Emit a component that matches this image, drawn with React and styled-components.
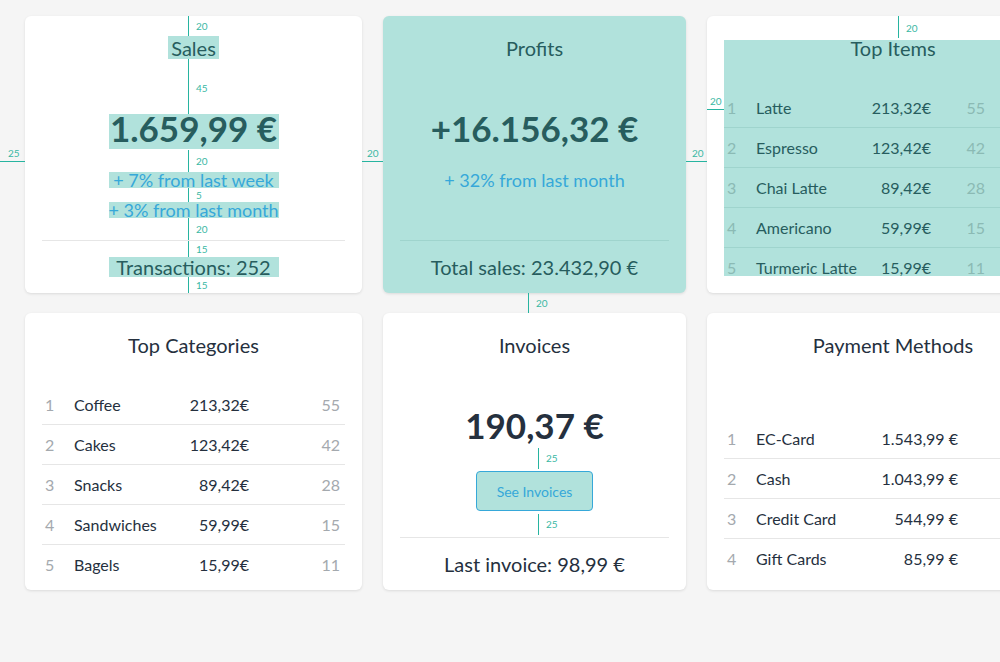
import React from "react";
import styled, { createGlobalStyle } from "styled-components";

const HL = "#b1e2dc";
const HL_TEXT = "#275d5e";
const HL_GRAY = "#8bbab4";
const HL_LINE = "#9fd4cd";
const TEXT = "#25303e";
const GRAY = "#a4a9ae";
const LINE = "#e6e6e6";
const BLUE = "#36a8d9";
const GUIDE = "#27b4a0";

const GlobalStyle = createGlobalStyle`
  html, body {
    margin: 0;
    background: #f5f5f5;
    overflow: hidden;
  }
  body {
    font-family: Lato, "Open Sans", sans-serif;
  }
`;

const Root = styled.div`
  position: relative;
  min-height: 100vh;
`;

const Grid = styled.div`
  display: grid;
  grid-template-columns: 337px 303px 372px;
  grid-auto-rows: 277px;
  column-gap: 21px;
  row-gap: 20px;
  padding: 16px 0 0 25px;
`;

const Card = styled.div`
  box-sizing: border-box;
  height: 277px;
  padding: 20px 17px 16px;
  display: flex;
  flex-direction: column;
  align-items: ${(p) => (p.$stretch ? "stretch" : "center")};
  background: ${(p) => (p.$hl ? HL : "#fff")};
  border-radius: 6px;
  box-shadow: 0 1px 3px rgba(0, 0, 0, 0.11);
`;

const Title = styled.h2`
  margin: 0;
  align-self: center;
  padding: 0 3px;
  height: 23px;
  font-size: 20px;
  line-height: 24px;
  font-weight: 400;
  white-space: nowrap;
  color: ${(p) => (p.$tint ? HL_TEXT : TEXT)};
  background: ${(p) => (p.$box ? HL : "transparent")};
`;

const Value = styled.div`
  margin-top: 55px;
  height: 35px;
  width: ${(p) => (p.$box ? "170px" : "auto")};
  font-size: 35px;
  line-height: 28px;
  font-weight: 700;
  text-align: center;
  white-space: nowrap;
  color: ${(p) => (p.$tint ? HL_TEXT : TEXT)};
  background: ${(p) => (p.$box ? HL : "transparent")};
`;

const Sub = styled.div`
  margin-top: ${(p) => p.$gap}px;
  height: 16px;
  width: ${(p) => (p.$box ? "170px" : "auto")};
  font-size: 18px;
  line-height: 17px;
  text-align: center;
  white-space: nowrap;
  color: ${BLUE};
  background: ${(p) => (p.$box ? HL : "transparent")};
`;

const Spacer = styled.div`
  flex: 1;
`;

const Divider = styled.div`
  align-self: stretch;
  flex-shrink: 0;
  height: 1px;
  background: ${(p) => (p.$tint ? HL_LINE : LINE)};
`;

const Footer = styled.div`
  margin-top: 16px;
  height: 20px;
  width: ${(p) => (p.$box ? "170px" : "auto")};
  font-size: 20px;
  line-height: 20px;
  text-align: center;
  white-space: nowrap;
  color: ${(p) => (p.$tint ? HL_TEXT : TEXT)};
  background: ${(p) => (p.$box ? HL : "transparent")};
`;

const Button = styled.button`
  margin-top: 25px;
  flex-shrink: 0;
  width: 117px;
  height: 40px;
  border: 1px solid ${BLUE};
  border-radius: 4px;
  background: ${HL};
  color: ${BLUE};
  font-family: Lato, sans-serif;
  font-size: 14px;
  cursor: pointer;
`;

const Content = styled.div`
  flex: 1;
  min-height: 0;
  display: flex;
  flex-direction: column;
  background: ${(p) =>
    p.$hl
      ? `linear-gradient(${HL}, ${HL}) 0 4px / 100% calc(100% - 5px) no-repeat`
      : "none"};
`;

const List = styled.div`
  margin-top: ${(p) => p.$top}px;
`;

const Row = styled.div`
  display: grid;
  grid-template-columns: ${(p) => p.$cols};
  height: 39px;
  line-height: 39px;
  font-size: 16px;
  white-space: nowrap;
  border-bottom: 1px solid ${(p) => (p.$tint ? HL_LINE : LINE)};
  &:last-child {
    border-bottom: none;
  }
`;

const Index = styled.span`
  padding-left: 3px;
  color: ${(p) => (p.$tint ? HL_GRAY : GRAY)};
`;

const Name = styled.span`
  color: ${(p) => (p.$tint ? HL_TEXT : TEXT)};
`;

const Price = styled.span`
  text-align: right;
  color: ${(p) => (p.$tint ? HL_TEXT : TEXT)};
`;

const Count = styled.span`
  text-align: right;
  color: ${(p) => (p.$tint ? HL_GRAY : GRAY)};
`;

const VGuide = styled.div`
  position: absolute;
  left: ${(p) => p.$x}px;
  top: ${(p) => p.$y}px;
  width: 1px;
  height: ${(p) => p.$len}px;
  background: ${GUIDE};
`;

const HGuide = styled.div`
  position: absolute;
  left: ${(p) => p.$x}px;
  top: ${(p) => p.$y}px;
  height: 1px;
  width: ${(p) => p.$len}px;
  background: ${GUIDE};
`;

const GuideLabel = styled.span`
  position: absolute;
  left: ${(p) => p.$x}px;
  top: ${(p) => p.$y - 6}px;
  font-size: 10px;
  line-height: 12px;
  color: #3ab8a4;
  white-space: nowrap;
`;

const topItems = [
  ["Latte", "213,32€", 55],
  ["Espresso", "123,42€", 42],
  ["Chai Latte", "89,42€", 28],
  ["Americano", "59,99€", 15],
  ["Turmeric Latte", "15,99€", 11],
];

const categories = [
  ["Coffee", "213,32€", 55],
  ["Cakes", "123,42€", 42],
  ["Snacks", "89,42€", 28],
  ["Sandwiches", "59,99€", 15],
  ["Bagels", "15,99€", 11],
];

const payments = [
  ["EC-Card", "1.543,99 €"],
  ["Cash", "1.043,99 €"],
  ["Credit Card", "544,99 €"],
  ["Gift Cards", "85,99 €"],
];

// spacing guides drawn by the inspector
const vGuides = [
  { x: 188, y: 16, len: 20, label: "20", ly: 26 },
  { x: 188, y: 59, len: 55, label: "45", ly: 88 },
  { x: 188, y: 150, len: 22, label: "20", ly: 161 },
  { x: 188, y: 188, len: 14, label: "5", ly: 195 },
  { x: 188, y: 218, len: 22, label: "20", ly: 229 },
  { x: 188, y: 241, len: 16, label: "15", ly: 249 },
  { x: 188, y: 277, len: 16, label: "15", ly: 285 },
  { x: 898, y: 16, len: 22, label: "20", ly: 28 },
  { x: 528, y: 293, len: 20, label: "20", ly: 303 },
  { x: 538, y: 448, len: 21, label: "25", ly: 458 },
  { x: 538, y: 514, len: 21, label: "25", ly: 524 },
];

const hGuides = [
  { x: 0, y: 161, len: 25, label: "25", lx: 8, ly: 153 },
  { x: 362, y: 161, len: 21, label: "20", lx: 367, ly: 153 },
  { x: 686, y: 161, len: 21, label: "20", lx: 692, ly: 153 },
  { x: 707, y: 109, len: 17, label: "20", lx: 710, ly: 101 },
];

const ItemList = ({ rows, cols, top, tint }) => (
  <List $top={top}>
    {rows.map(([name, price, count], i) => (
      <Row key={name} $cols={cols} $tint={tint}>
        <Index $tint={tint}>{i + 1}</Index>
        <Name $tint={tint}>{name}</Name>
        <Price $tint={tint}>{price}</Price>
        {count !== undefined && <Count $tint={tint}>{count}</Count>}
      </Row>
    ))}
  </List>
);

const App = () => (
  <Root>
    <GlobalStyle />
    <Grid>
      <Card>
        <Title $box $tint>Sales</Title>
        <Value $box $tint>1.659,99 €</Value>
        <Sub $box $gap={23}>+ 7% from last week</Sub>
        <Sub $box $gap={14}>+ 3% from last month</Sub>
        <Spacer />
        <Divider />
        <Footer $box $tint>Transactions: 252</Footer>
      </Card>

      <Card $hl>
        <Title $tint>Profits</Title>
        <Value $tint>+16.156,32 €</Value>
        <Sub $gap={23}>+ 32% from last month</Sub>
        <Spacer />
        <Divider $tint />
        <Footer $tint>Total sales: 23.432,90 €</Footer>
      </Card>

      <Card $stretch>
        <Content $hl>
          <Title $tint>Top Items</Title>
          <ItemList rows={topItems} cols="32px 85px 90px 54px" top={29} tint />
        </Content>
      </Card>

      <Card $stretch>
        <Title>Top Categories</Title>
        <ItemList rows={categories} cols="32px 85px 90px 91px" top={29} />
      </Card>

      <Card>
        <Title>Invoices</Title>
        <Value>190,37 €</Value>
        <Button>See Invoices</Button>
        <Spacer />
        <Divider />
        <Footer>Last invoice: 98,99 €</Footer>
      </Card>

      <Card $stretch>
        <Title>Payment Methods</Title>
        <ItemList rows={payments} cols="32px 110px 92px" top={63} />
      </Card>
    </Grid>

    {vGuides.map((g, i) => (
      <React.Fragment key={"v" + i}>
        <VGuide $x={g.x} $y={g.y} $len={g.len} />
        <GuideLabel $x={g.x + 8} $y={g.ly}>{g.label}</GuideLabel>
      </React.Fragment>
    ))}
    {hGuides.map((g, i) => (
      <React.Fragment key={"h" + i}>
        <HGuide $x={g.x} $y={g.y} $len={g.len} />
        <GuideLabel $x={g.lx} $y={g.ly}>{g.label}</GuideLabel>
      </React.Fragment>
    ))}
  </Root>
);

export default App;
